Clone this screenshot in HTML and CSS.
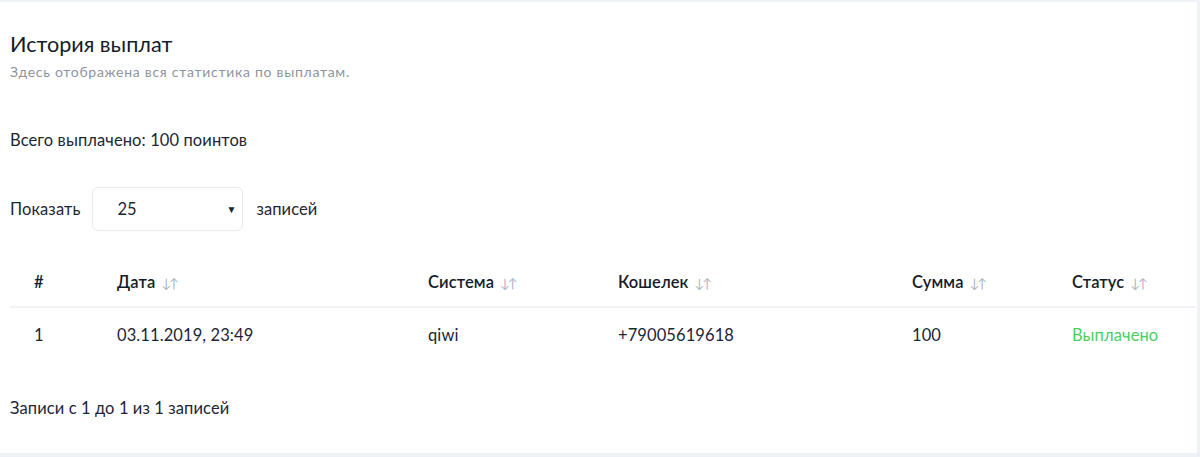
FILE: index.html
```html
<!DOCTYPE html>
<html lang="ru">
<head>
<meta charset="utf-8">
<link rel="stylesheet" href="styles.css">
</head>
<body>
<div class="card">
  <h1 class="title">История выплат</h1>
  <p class="subtitle">Здесь отображена вся статистика по выплатам.</p>
  <p class="total">Всего выплачено: 100 поинтов</p>
  <div class="length">
    <span>Показать</span>
    <div class="select"><span>25</span><span class="caret">▼</span></div>
    <span>записей</span>
  </div>
  <table class="table">
    <colgroup>
      <col class="c1"><col class="c2"><col class="c3"><col class="c4"><col class="c5"><col class="c6">
    </colgroup>
    <thead>
      <tr>
        <th>#</th>
        <th>Дата <span class="sort">↓↑</span></th>
        <th>Система <span class="sort">↓↑</span></th>
        <th>Кошелек <span class="sort">↓↑</span></th>
        <th>Сумма <span class="sort">↓↑</span></th>
        <th>Статус <span class="sort">↓↑</span></th>
      </tr>
    </thead>
    <tbody>
      <tr>
        <td>1</td>
        <td>03.11.2019, 23:49</td>
        <td>qiwi</td>
        <td>+79005619618</td>
        <td>100</td>
        <td class="paid">Выплачено</td>
      </tr>
    </tbody>
  </table>
  <p class="info">Записи с 1 до 1 из 1 записей</p>
</div>
</body>
</html>
```

FILE: styles.css
```css
html, body {
  margin: 0;
  padding: 0;
}
body {
  background: #eef1f5;
  font-family: Lato, "Noto Sans", sans-serif;
  color: #1b2636;
  width: 1200px;
  height: 457px;
  overflow: hidden;
}
.card {
  background: #ffffff;
  width: 1197px;
  height: 451px;
  margin-top: 2px;
  padding: 30px 0 0 10px;
  box-sizing: border-box;
  font-size: 16.5px;
  letter-spacing: 0.1px;
}
.title {
  margin: 0;
  font-size: 21.6px;
  line-height: 24px;
  font-weight: 400;
  letter-spacing: 0;
  color: #141c2b;
}
.subtitle {
  margin: 7px 0 0;
  font-size: 14px;
  line-height: 18px;
  letter-spacing: 0.72px;
  color: #8d949e;
}
.total {
  margin: 49px 0 0;
  line-height: 20px;
}
.length {
  margin-top: 37px;
  display: flex;
  align-items: center;
  height: 44px;
}
.select {
  margin-left: 12px;
  margin-right: 13px;
  width: 151px;
  height: 44px;
  box-sizing: border-box;
  border: 1px solid #e7eaee;
  border-radius: 6px;
  display: flex;
  align-items: center;
  justify-content: space-between;
  padding: 0 6px 0 24px;
}
.caret {
  font-size: 10px;
  color: #1b2636;
}
.table {
  margin-top: 26px;
  border-collapse: collapse;
  table-layout: fixed;
  width: 1186px;
}
.c1 { width: 83px; }
.c2 { width: 311px; }
.c3 { width: 190px; }
.c4 { width: 294px; }
.c5 { width: 160px; }
.c6 { width: 148px; }
.table th, .table td {
  text-align: left;
  padding: 0 0 0 24px;
  white-space: nowrap;
}
.table th {
  height: 49px;
  font-weight: 600;
  color: #141c2b;
  border-bottom: 2px solid #f0f2f5;
}
.table td {
  height: 54px;
}
.sort {
  color: #a9b5c6;
  font-weight: 400;
  font-size: 13px;
  margin-left: 2px;
  letter-spacing: -2px;
}
.paid {
  color: #47cf5f;
}
.info {
  margin: 36px 0 0;
  line-height: 20px;
}
```
